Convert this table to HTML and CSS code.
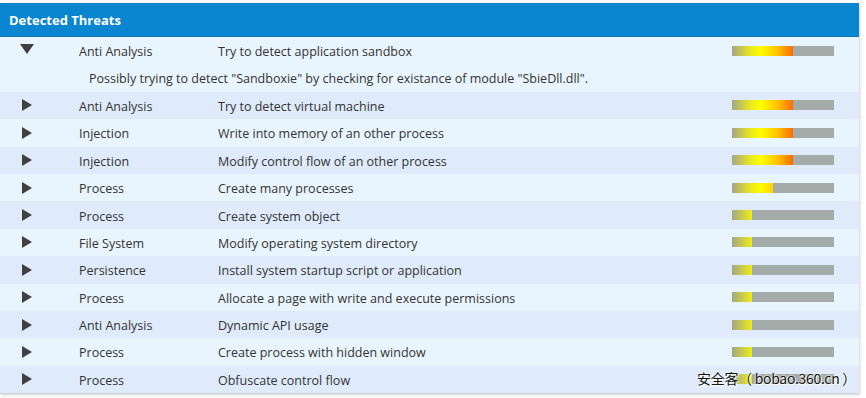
FILE: index.html
```html
<!DOCTYPE html>
<html>
<head>
<meta charset="utf-8">
<link rel="stylesheet" href="styles.css">
</head>
<body>
<div class="panel">
  <div class="header">Detected Threats</div>
  <div class="rows">
    <div class="row light">
      <span class="arrow down"></span><span class="cat">Anti Analysis</span><span class="title">Try to detect application sandbox</span><span class="bar"><span class="fill" style="width:60%"></span></span>
    </div>
    <div class="detail light">Possibly trying to detect "Sandboxie" by checking for existance of module "SbieDll.dll".</div>
    <div class="row dark"><span class="arrow"></span><span class="cat">Anti Analysis</span><span class="title">Try to detect virtual machine</span><span class="bar"><span class="fill" style="width:60%"></span></span></div>
    <div class="row light"><span class="arrow"></span><span class="cat">Injection</span><span class="title">Write into memory of an other process</span><span class="bar"><span class="fill" style="width:60%"></span></span></div>
    <div class="row dark"><span class="arrow"></span><span class="cat">Injection</span><span class="title">Modify control flow of an other process</span><span class="bar"><span class="fill" style="width:60%"></span></span></div>
    <div class="row light"><span class="arrow"></span><span class="cat">Process</span><span class="title">Create many processes</span><span class="bar"><span class="fill" style="width:40%"></span></span></div>
    <div class="row dark"><span class="arrow"></span><span class="cat">Process</span><span class="title">Create system object</span><span class="bar"><span class="fill" style="width:20%"></span></span></div>
    <div class="row light"><span class="arrow"></span><span class="cat">File System</span><span class="title">Modify operating system directory</span><span class="bar"><span class="fill" style="width:20%"></span></span></div>
    <div class="row dark"><span class="arrow"></span><span class="cat">Persistence</span><span class="title">Install system startup script or application</span><span class="bar"><span class="fill" style="width:20%"></span></span></div>
    <div class="row light"><span class="arrow"></span><span class="cat">Process</span><span class="title">Allocate a page with write and execute permissions</span><span class="bar"><span class="fill" style="width:20%"></span></span></div>
    <div class="row dark"><span class="arrow"></span><span class="cat">Anti Analysis</span><span class="title">Dynamic API usage</span><span class="bar"><span class="fill" style="width:20%"></span></span></div>
    <div class="row light"><span class="arrow"></span><span class="cat">Process</span><span class="title">Create process with hidden window</span><span class="bar"><span class="fill" style="width:20%"></span></span></div>
    <div class="row dark"><span class="arrow"></span><span class="cat">Process</span><span class="title">Obfuscate control flow</span><span class="bar"><span class="fill" style="width:20%"></span></span></div>
  </div>
</div>
<div class="watermark">安全客（ bobao.360.cn ）</div>
</body>
</html>
```
FILE: styles.css
```css
html, body {
  margin: 0;
  padding: 0;
  background: #ffffff;
}
body {
  font-family: "Open Sans", "Noto Sans", sans-serif;
  font-size: 12.5px;
  color: #333;
  position: relative;
  height: 398px;
  overflow: hidden;
}
.panel {
  margin-top: 3px;
  width: 859px;
  box-shadow: 1px 1px 3px rgba(0,0,0,0.18);
  border-bottom: 1px solid #c9d3dc;
}
.header {
  height: 33px;
  background: #0a85cf;
  border-bottom: 1px solid #1072b0;
  color: #fff;
  font-weight: 700;
  font-size: 13px;
  line-height: 34px;
  padding-left: 9px;
}
.rows {
  display: flex;
  flex-direction: column;
}
.light { background: #e9f5fe; }
.dark { background: #dfebfa; }
.row {
  height: 27.4px;
  display: grid;
  grid-template-columns: 79px 139px 1fr 102px;
  align-items: center;
  padding-right: 25px;
}
.cat, .title {
  padding-top: 2px;
}
.arrow {
  justify-self: start;
  margin-left: 22px;
  width: 0;
  height: 0;
  border-top: 6.5px solid transparent;
  border-bottom: 6.5px solid transparent;
  border-left: 10px solid #404040;
}
.arrow.down {
  margin-left: 20px;
  margin-top: -3px;
  border-left: 7px solid transparent;
  border-right: 7px solid transparent;
  border-top: 10px solid #404040;
  border-bottom: 0;
}
.bar {
  height: 10px;
  background: #a3aca8;
  position: relative;
  overflow: hidden;
}
.fill {
  display: block;
  height: 100%;
  background: linear-gradient(to right, #a3a685 0%, #e8e820 18%, #ffff00 28%, #ffc000 45%, #ff6a00 60%, #ff5000 100%);
  background-size: 102px 100%;
  background-repeat: no-repeat;
}
.detail {
  height: 27.4px;
  line-height: 29px;
  padding-left: 89px;
}
.watermark {
  position: absolute;
  left: 697px;
  top: 368px;
  font-family: "Noto Sans CJK SC", "Open Sans", sans-serif;
  font-size: 14px;
  letter-spacing: -0.3px;
  color: #111;
  text-shadow: 0 0 2px #fff, 0 0 2px #fff, 1px 1px 1px #fff;
}
```
